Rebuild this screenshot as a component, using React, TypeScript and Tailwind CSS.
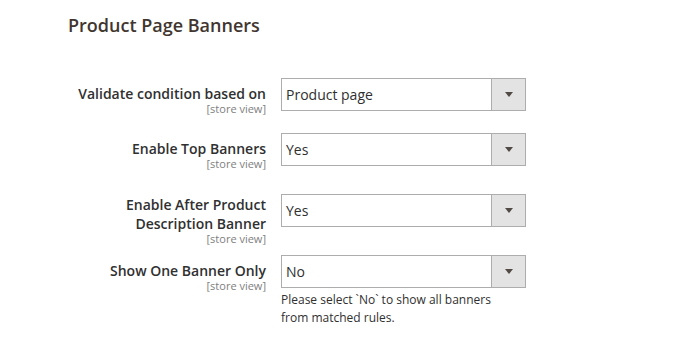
const rows = [
  { label: ['Validate condition based on'], value: 'Product page', h: 'h-[55px]', pt: 'pt-[7px]', lh: 'leading-[18px]' },
  { label: ['Enable Top Banners'], value: 'Yes', h: 'h-[61px]', pt: 'pt-[7px]', lh: 'leading-[18px]' },
  {
    label: ['Enable After Product', 'Description Banner'],
    value: 'Yes',
    h: 'h-[61px]',
    pt: 'pt-[1px]',
    lh: 'leading-[19px]',
  },
  {
    label: ['Show One Banner Only'],
    value: 'No',
    h: '',
    pt: 'pt-[6px]',
    lh: 'leading-[19px]',
    note: 'Please select `No` to show all banners from matched rules.',
  },
];

const FakeSelect = ({ value }: { value: string }) => (
  <div className="flex h-[33px] w-[245px] border border-[#adadad] bg-white">
    <div className="flex flex-1 items-center pl-[4px] text-[14px] text-[#303030]">{value}</div>
    <div className="flex w-[34px] items-center justify-center border-l border-[#adadad] bg-[#e3e3e3]">
      <span className="block h-0 w-0 border-l-[4px] border-r-[4px] border-t-[5px] border-l-transparent border-r-transparent border-t-[#514943]"></span>
    </div>
  </div>
);

const App = () => {
  return (
    <div
      className="h-[350px] w-[685px] bg-white pl-[68px] pt-[15px]"
      style={{ fontFamily: '"Open Sans", "Liberation Sans", sans-serif' }}
    >
      <h2 className="text-[18px] leading-[20px] font-semibold text-[#41362f]">Product Page Banners</h2>
      <div className="mt-[43px]">
        {rows.map((row, index) => (
          <div key={index} className={`flex ${row.h}`}>
            <div className={`w-[198px] text-right ${row.pt}`}>
              {row.label.map((line) => (
                <div key={line} className={`text-[14px] font-semibold text-[#303030] ${row.lh}`}>
                  {line}
                </div>
              ))}
              <div className="text-[11px] leading-[11px] text-[#808080]">[store view]</div>
            </div>
            <div className="ml-[15px]">
              <FakeSelect value={row.value} />
              {row.note && (
                <p className="mt-[3px] w-[235px] text-[12px] leading-[18px] text-[#303030]">{row.note}</p>
              )}
            </div>
          </div>
        ))}
      </div>
    </div>
  );
};

export default App;
